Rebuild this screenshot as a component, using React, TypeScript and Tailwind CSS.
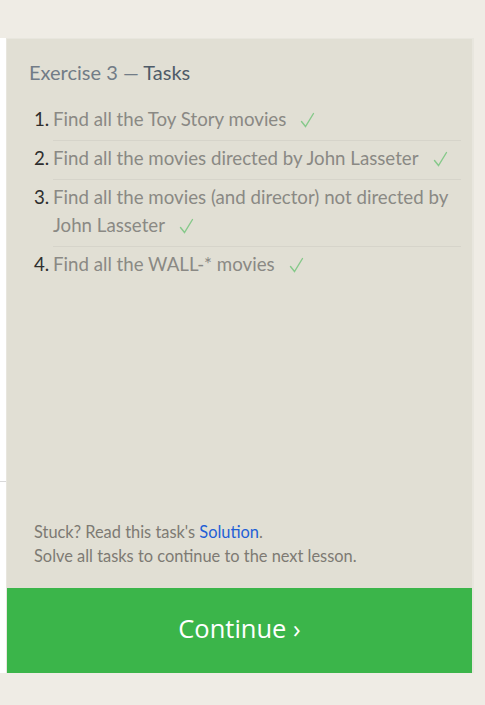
import React from "react";

const tasks = [
  "Find all the Toy Story movies",
  "Find all the movies directed by John Lasseter",
  "Find all the movies (and director) not directed by John Lasseter",
  "Find all the WALL-* movies",
];

function Check() {
  return (
    <svg
      className="ml-[14px] inline-block align-[-2px]"
      width="15"
      height="16"
      viewBox="0 0 15 16"
      fill="none"
      stroke="#86c98a"
      strokeWidth="1.4"
      strokeLinecap="round"
    >
      <path d="M1.5 9.5 L5.5 14.5 L13.5 1.5" />
    </svg>
  );
}

export default function App() {
  return (
    <div
      className="min-h-[705px] w-[485px] bg-[#efece5] pt-[38px]"
      style={{ fontFamily: "Lato, 'Open Sans', sans-serif" }}
    >
      <div className="flex h-[635px]">
        <div className="flex w-[6px] flex-col bg-white">
          <div className="h-[444px] border-b border-[#d9d9d9]" />
        </div>
        <div className="flex w-[468px] flex-col border-l border-t border-r-2 border-[#e8e6de] bg-[#e1dfd4]">
          <div className="flex flex-1 flex-col pl-[22px] pr-[11px] pt-[19px]">
            <h2 className="text-[20px] leading-[28px] text-[#727c87]">
              Exercise 3 — <span className="text-[#4f5b68]">Tasks</span>
            </h2>
            <ol className="mt-[16px] pl-[24px]">
              {tasks.map((t, i) => (
                <li
                  key={i}
                  className={`relative pb-[7px] pt-[3px] text-[18.7px] leading-[28px] text-[#8a8984] ${
                    i > 0 ? "border-t border-[#d6d4ca]" : ""
                  }`}
                >
                  <span className="absolute left-[-19px] text-[#2e2e2e]">{i + 1}.</span>
                  {t}
                  <Check />
                </li>
              ))}
            </ol>
            <div className="mt-auto pb-[20px] pl-[5px] text-[16.4px] leading-[24px] text-[#7d7a73]">
              <p>
                Stuck? Read this task's <span className="text-[#1f5fd6]">Solution</span>.
              </p>
              <p>Solve all tasks to continue to the next lesson.</p>
            </div>
          </div>
          <button
            className="flex h-[85px] w-full items-center justify-center bg-[#3bb54a] pb-[5px] text-[25.5px] text-white"
            style={{ fontFamily: "'Open Sans', sans-serif" }}
          >
            Continue ›
          </button>
        </div>
      </div>
    </div>
  );
}
